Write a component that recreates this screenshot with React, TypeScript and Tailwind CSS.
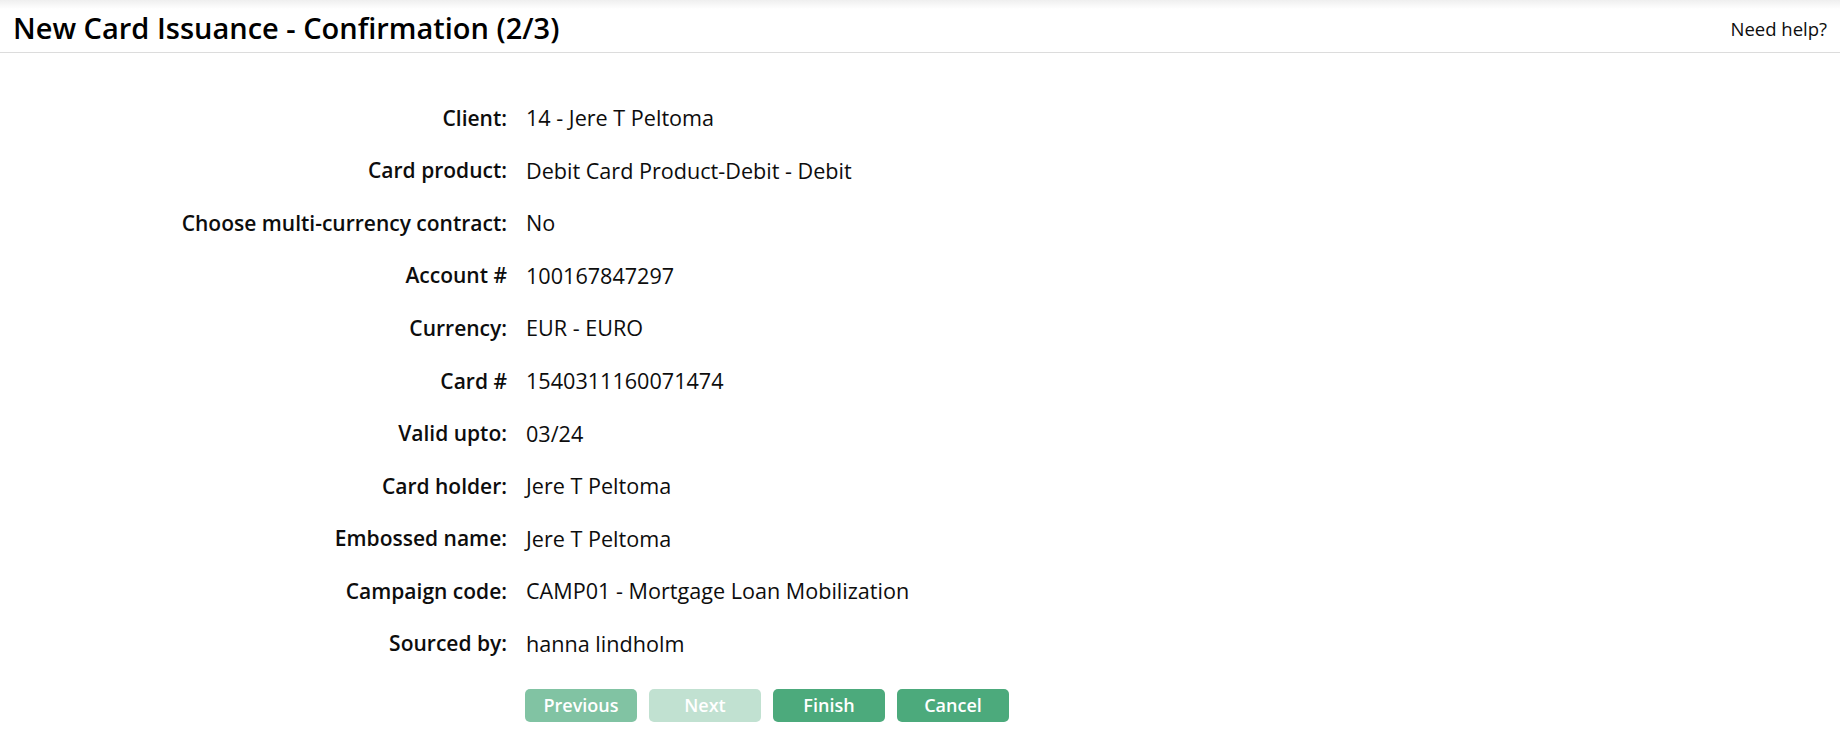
const rows: [string, string][] = [
  ["Client:", "14 - Jere T Peltoma"],
  ["Card product:", "Debit Card Product-Debit - Debit"],
  ["Choose multi-currency contract:", "No"],
  ["Account #", "100167847297"],
  ["Currency:", "EUR - EURO"],
  ["Card #", "1540311160071474"],
  ["Valid upto:", "03/24"],
  ["Card holder:", "Jere T Peltoma"],
  ["Embossed name:", "Jere T Peltoma"],
  ["Campaign code:", "CAMP01 - Mortgage Loan Mobilization"],
  ["Sourced by:", "hanna lindholm"],
];

const App = () => {
  return (
    <div className="min-h-screen bg-white text-[#0d0d0d] font-['Open_Sans','Liberation_Sans',sans-serif]">
      <div className="h-[53px] flex items-center justify-between px-[13px] border-b border-[#dcdcdc] bg-[linear-gradient(to_bottom,#efefef,#ffffff_9px)]">
        <h1 className="text-[29px] font-semibold leading-none pt-[2px] text-black">New Card Issuance - Confirmation (2/3)</h1>
        <a href="" className="text-[18.5px] leading-none pt-[6px]">Need help?</a>
      </div>

      <div className="pt-[39px]">
        {rows.map(([label, value]) => (
          <div key={label} className="h-[52.6px] flex items-center">
            <div className="w-[507px] text-right font-semibold text-[21px]">{label}</div>
            <div className="ml-[19px] text-[21.6px]">{value}</div>
          </div>
        ))}
        <div className="flex gap-[12px] pl-[525px] mt-[18px]">
          <button className="w-[112px] h-[33px] rounded-[5px] bg-[#4caa7c]/70 text-white font-semibold text-[18px]">Previous</button>
          <button className="w-[112px] h-[33px] rounded-[5px] bg-[#4caa7c]/35 text-white font-semibold text-[18px]">Next</button>
          <button className="w-[112px] h-[33px] rounded-[5px] bg-[#4caa7c] text-white font-semibold text-[18px]">Finish</button>
          <button className="w-[112px] h-[33px] rounded-[5px] bg-[#4caa7c] text-white font-semibold text-[18px]">Cancel</button>
        </div>
      </div>
    </div>
  );
};

export default App;
